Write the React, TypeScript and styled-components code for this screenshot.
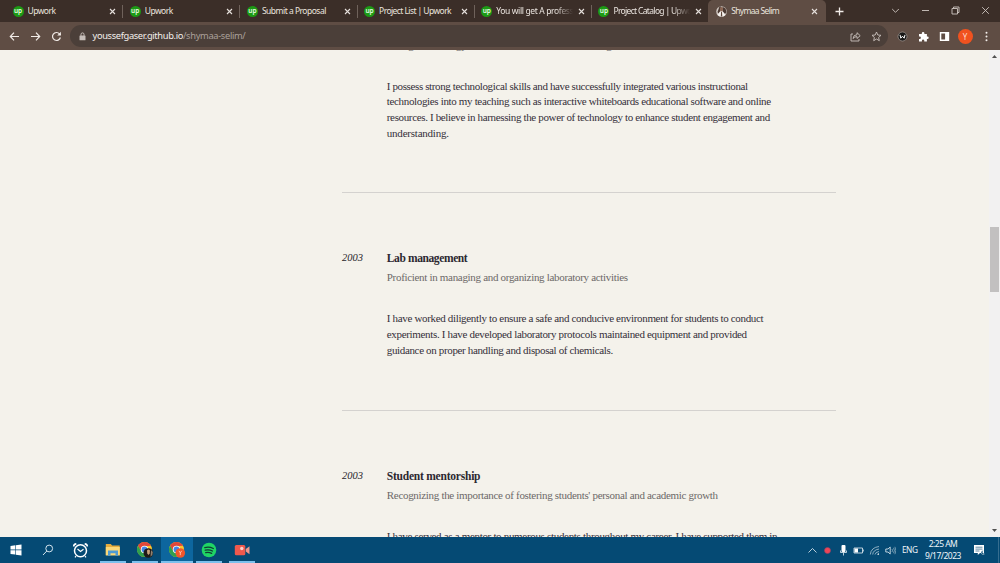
import { useLayoutEffect, useRef, useState } from 'react';
import styled, { createGlobalStyle, css } from 'styled-components';

const tabs = [
  { title: 'Upwork', width: 28 },
  { title: 'Upwork', width: 28 },
  { title: 'Submit a Proposal', width: 64 },
  { title: 'Project List | Upwork', width: 72 },
  { title: 'You will get A profess', width: 77, fade: true },
  { title: 'Project Catalog | Upwo', width: 78, fade: true },
  { title: 'Shymaa Selim', width: 48, active: true },
];

const entries = [
  {
    year: '',
    title: '',
    subtitle: 'Using technology to enhance the student learning',
    subtitleWidth: 225,
    lines: [
      { text: 'I possess strong technological skills and have successfully integrated various instructional', width: 361 },
      { text: 'technologies into my teaching such as interactive whiteboards educational software and online', width: 384 },
      { text: 'resources. I believe in harnessing the power of technology to enhance student engagement and', width: 383 },
      { text: 'understanding.', width: 62 },
    ],
  },
  {
    year: '2003',
    title: 'Lab management',
    titleWidth: 80.5,
    subtitle: 'Proficient in managing and organizing laboratory activities',
    subtitleWidth: 241,
    lines: [
      { text: 'I have worked diligently to ensure a safe and conducive environment for students to conduct', width: 376.5 },
      { text: 'experiments. I have developed laboratory protocols maintained equipment and provided', width: 360 },
      { text: 'guidance on proper handling and disposal of chemicals.', width: 226 },
    ],
  },
  {
    year: '2003',
    title: 'Student mentorship',
    titleWidth: 93.5,
    subtitle: "Recognizing the importance of fostering students' personal and academic growth",
    subtitleWidth: 331,
    lines: [
      { text: 'I have served as a mentor to numerous students throughout my career. I have supported them in', width: 390.5 },
    ],
  },
];

// Tracks the letters so that the text takes the given width
function FitText({ text, width }: { text: string; width: number }) {
  const ref = useRef<HTMLSpanElement>(null);
  const [spacing, setSpacing] = useState(0);

  useLayoutEffect(() => {
    if (!ref.current) return;
    const natural = ref.current.getBoundingClientRect().width - spacing * text.length;
    setSpacing((width - natural) / text.length);
  }, [text, width]);

  return <Fitted ref={ref} style={{ letterSpacing: `${spacing}px` }}>{text}</Fitted>;
}

const CloseIcon = () => (
  <svg width="7" height="7" viewBox="0 0 7 7" stroke="#e6e0dc" strokeWidth="1.1" fill="none">
    <path d="M1 1l5 5M6 1L1 6" />
  </svg>
);

const PortraitIcon = () => (
  <svg width="11" height="11" viewBox="0 0 11 11">
    <circle cx="5.5" cy="5.5" r="5.3" fill="#cfc6c0" />
    <path d="M3.300 1L5 .5 4.300 5 2.500 7.500 1.500 6zM6.500.8L9.500 2.500 10.500 6 9 8 7 6z" fill="#4b3a33" />
    <path d="M4 4Q3.800 1 5.500 1T7 4L6.300 6h-1.500z" fill="#8a6654" />
    <path d="M4.300 5.500h2.400L9.500 9Q5.500 12.500 1.500 9z" fill="#f5f2ef" />
    <path d="M5.100 6h.9l.3 4.500H4.800z" fill="#5a4439" />
  </svg>
);

const ChromeIcon = ({ badge }: { badge: 'photo' | 'letter' }) => (
  <svg width="18" height="18" viewBox="0 0 18 18">
    <circle cx="8.500" cy="8.500" r="7.500" fill="#fbc62d" />
    <path d="M2 4.750A7.500 7.500 0 0 1 15 4.750L8.500 5.200 5.300 10.400z" fill="#e0473b" />
    <path d="M2 4.750A7.500 7.500 0 0 0 8.500 16L11.500 10.500 5.500 10.400z" fill="#2fa04f" />
    <circle cx="8.500" cy="8.500" r="3.700" fill="#fff" />
    <circle cx="8.500" cy="8.500" r="2.900" fill="#4285e8" />
    {badge === 'photo' ? (
      <>
        <circle cx="12.300" cy="12" r="4.800" fill="#1f1a19" />
        <path d="M11 9.500q1.500-2 3 0l-.3 3-1.200 1.500-1.200-1.500z" fill="#c9a17b" />
        <path d="M15 9l1.800 2-.5 3-1.800 1.800z" fill="#8e8272" />
      </>
    ) : (
      <>
        <circle cx="12.300" cy="12" r="4.800" fill="#f0562b" />
        <path d="M10.900 9.800l1.400 2.100 1.400-2.100M12.300 11.900v2.300" stroke="#ffd5c4" strokeWidth=".8" fill="none" />
      </>
    )}
  </svg>
);

export default function App() {
  return (
    <Screen>
      <GlobalStyle />
      <TabStrip>
        {tabs.map((tab, i) => (
          <Tab key={i} $active={tab.active} $divider={i < 5}>
            {tab.active ? <PortraitIcon /> : <UpBadge>up</UpBadge>}
            <TabTitle $fade={tab.fade}><FitText text={tab.title} width={tab.width} /></TabTitle>
            <CloseIcon />
          </Tab>
        ))}
        <NewTab>
          <svg width="9" height="9" viewBox="0 0 9 9" stroke="#f1ece8" strokeWidth="1.300">
            <path d="M4.500.5v8M.5 4.500h8" />
          </svg>
        </NewTab>
        <WindowControls>
          <svg width="9" height="9" viewBox="0 0 9 9"><path d="M1.200 3l3.300 3.300L7.800 3" /></svg>
          <svg width="9" height="9" viewBox="0 0 9 9"><path d="M1 4.500h7" /></svg>
          <svg width="9" height="9" viewBox="0 0 9 9"><path d="M1 2.500h5.500V8H1zM2.500 2.500V1H8v5.500H6.500" /></svg>
          <svg width="9" height="9" viewBox="0 0 9 9"><path d="M1.200 1.200l6.600 6.600M7.800 1.200L1.200 7.800" /></svg>
        </WindowControls>
      </TabStrip>

      <Toolbar>
        <NavButtons>
          <svg width="11" height="11" viewBox="0 0 11 11"><path d="M10 5.500H1.500M5 1.700L1.300 5.500 5 9.300" /></svg>
          <svg width="11" height="11" viewBox="0 0 11 11"><path d="M1 5.500h8.500M6 1.700l3.700 3.800L6 9.300" /></svg>
          <svg width="11" height="11" viewBox="0 0 11 11">
            <path d="M9.400 6.500A4 4 0 1 1 8.500 2.800L9.600 3.900" />
            <path d="M9.900.8v3.700H6.200z" fill="#f1ebe7" stroke="none" />
          </svg>
        </NavButtons>
        <AddressBar>
          <svg width="7" height="9" viewBox="0 0 7 9">
            <rect x=".5" y="3.500" width="6" height="4.800" rx=".6" fill="#c6beb9" />
            <path d="M2 3.800V2.400a1.500 1.500 0 0 1 3 0v1.400" stroke="#c6beb9" fill="none" />
          </svg>
          <Url>
            <FitText text="youssefgaser.github.io" width={90.500} />
            <Path><FitText text="/shymaa-selim/" width={62.500} /></Path>
          </Url>
          <AddressActions>
            <svg width="11" height="11" viewBox="0 0 11 11">
              <path d="M3 3H1v7h8V8M3 7.500q.4-3.800 4-3.800V1.700l3.200 3L7 7.500V5.600Q4.700 5.500 3 7.500z" />
            </svg>
            <svg width="11" height="11" viewBox="0 0 11 11">
              <path d="M5.500 1l1.300 3 3.200.3-2.400 2.200.7 3.200-2.800-1.700-2.800 1.700.7-3.200L1 4.300 4.200 4z" />
            </svg>
          </AddressActions>
        </AddressBar>
        <Extensions>
          <svg width="11" height="11" viewBox="0 0 11 11">
            <circle cx="5.500" cy="5.500" r="4.500" fill="#171615" stroke="#a39b96" strokeWidth=".7" />
            <path d="M3 3.800l.8 3.400 1.700-2 1.700 2L8 3.800" fill="none" stroke="#fff" strokeWidth="1" />
          </svg>
          <svg width="11" height="11" viewBox="0 0 11 11">
            <path d="M1 3h2.800V2.200a1.300 1.300 0 0 1 2.600 0V3h2.500v2.500h.5a1.300 1.300 0 0 1 0 2.600h-.5v2.400H6.300v-.7a1.200 1.200 0 0 0-2.400 0v.7H1V8h.7a1.200 1.200 0 0 0 0-2.400H1z" fill="#fff" />
          </svg>
          <svg width="11" height="11" viewBox="0 0 11 11">
            <path d="M.8 1h9.400v9H.8zM2.300 2.500v6h3.800v-6z" fill="#fff" fillRule="evenodd" />
          </svg>
          <Avatar>Y</Avatar>
          <svg width="11" height="11" viewBox="0 0 11 11" fill="#f3eeea">
            <circle cx="5.500" cy="1.700" r="1" /><circle cx="5.500" cy="5.500" r="1" /><circle cx="5.500" cy="9.300" r="1" />
          </svg>
        </Extensions>
      </Toolbar>

      <Viewport>
        <Page>
          {entries.map((entry, i) => (
            <Entry key={i} $first={i === 0}>
              <Year>{entry.year}</Year>
              <div>
                {entry.title && <Title><FitText text={entry.title} width={entry.titleWidth ?? 0} /></Title>}
                <Subtitle><FitText text={entry.subtitle} width={entry.subtitleWidth} /></Subtitle>
                <Body>
                  {entry.lines.map(line => (
                    <Line key={line.text}><FitText text={line.text} width={line.width} /></Line>
                  ))}
                </Body>
              </div>
            </Entry>
          ))}
        </Page>
        <Scrollbar>
          <svg width="5" height="3" viewBox="0 0 5 3"><path d="M0 3L2.500 0 5 3z" fill="#505050" /></svg>
          <Thumb />
          <svg width="5" height="3" viewBox="0 0 5 3"><path d="M0 0L2.500 3 5 0z" fill="#505050" /></svg>
        </Scrollbar>
      </Viewport>

      <Taskbar>
        <Apps>
          <AppButton>
            <svg width="12" height="12" viewBox="0 0 12 12" fill="#fff">
              <path d="M.5 2l4.700-.7v4.300H.5zM5.800 1.200L11.500.4v5.200H5.800zM.5 6.300h4.700v4.300L.5 10zM5.800 6.300h5.700v5.200l-5.700-.8z" />
            </svg>
          </AppButton>
          <AppButton>
            <svg width="12" height="12" viewBox="0 0 12 12" fill="none" stroke="#d4e4ee">
              <circle cx="7.200" cy="4.500" r="3.400" /><path d="M4.800 7L1 11" />
            </svg>
          </AppButton>
          <AppButton>
            <svg width="17" height="17" viewBox="0 0 17 17" fill="none" stroke="#fff">
              <circle cx="8.500" cy="8.800" r="6" strokeWidth="1.500" />
              <path d="M5.500 7l3 2.500 3-2.300M4 14.200l-1 1.200M13 14.200l1 1.200" strokeWidth="1.200" />
              <path d="M1.700 4.500Q1.700 2.200 4.300 1.900M15.300 4.500Q15.300 2.200 12.700 1.900" strokeWidth="1.600" />
            </svg>
          </AppButton>
          <AppButton $open>
            <svg width="16" height="14" viewBox="0 0 16 14">
              <path d="M.8 1h5l1.300 1.500h7.600V12H.8z" fill="#e5ac3d" />
              <path d="M.8 4h14v8.500H.8z" fill="#fbd877" />
              <path d="M3 7.500h10v5.300h-2.500v-2.500h-5v2.500H3z" fill="#4d9bd4" />
            </svg>
          </AppButton>
          <AppButton $open><ChromeIcon badge="photo" /></AppButton>
          <AppButton $open $active><ChromeIcon badge="letter" /></AppButton>
          <AppButton $open>
            <svg width="16" height="16" viewBox="0 0 16 16">
              <circle cx="8" cy="8" r="7.300" fill="#20d565" />
              <path d="M3.800 5.700Q8 4.400 12.300 6.500M4.200 8.200Q8 7.100 11.500 9M4.700 10.600Q7.800 9.800 10.700 11.300" fill="none" stroke="#103d32" strokeWidth="1.300" strokeLinecap="round" />
            </svg>
          </AppButton>
          <AppButton $open>
            <svg width="16" height="14" viewBox="0 0 16 14">
              <rect x=".8" y="2" width="10.500" height="10.300" rx="1.500" fill="#ef594d" />
              <path d="M11.800 6l3.700-2.800v8L11.800 8.500z" fill="#f2968b" />
              <circle cx="7.800" cy="5.500" r="1.700" fill="#fbd0cb" />
            </svg>
          </AppButton>
        </Apps>
        <Tray>
          <svg width="11" height="11" viewBox="0 0 11 11"><path d="M1.500 7.500l4-4 4 4" /></svg>
          <svg width="11" height="11" viewBox="0 0 11 11"><circle cx="5.500" cy="5.500" r="3" fill="#ee4657" stroke="#993f62" strokeWidth=".6" /></svg>
          <svg width="11" height="11" viewBox="0 0 11 11">
            <rect x="3.500" y="0" width="4" height="7" rx="1" fill="#fff" stroke="none" />
            <path d="M2.500 5.500v2h6v-2M5.500 7.500v3" />
          </svg>
          <svg width="11" height="11" viewBox="0 0 11 11">
            <path d="M1 3h8.500v5H1zM10.300 4.500v2" /><path d="M1.500 3.500h3.500v4H1.500z" fill="#fff" stroke="none" />
          </svg>
          <svg width="11" height="11" viewBox="0 0 11 11">
            <path d="M1.300 9.500Q2 2.500 10 1.500M3.700 9.500Q4 5 10 4M6 9.500Q6.500 7 10 6.500" opacity=".75" />
            <path d="M8.300 9.800q0-1.500 1.700-1.500v1.500z" fill="#fff" stroke="none" />
          </svg>
          <svg width="11" height="11" viewBox="0 0 11 11">
            <path d="M.8 4H3l2.200-2v7L3 7H.8z" /><path d="M7 4q1 1.500 0 3M8.500 2.800q1.800 2.700 0 5.400M9.900 1.800q2 3.700 0 7.400" opacity=".6" />
          </svg>
        </Tray>
        <Language><FitText text="ENG" width={15.500} /></Language>
        <Clock>
          <FitText text="2:25 AM" width={28.500} />
          <FitText text="9/17/2023" width={36} />
        </Clock>
        <Notifications>
          <svg width="12" height="12" viewBox="0 0 12 12">
            <path d="M1 1h10v8H7l-2.200 2V9H1z" fill="#fff" />
            <path d="M2.500 3.200h7M2.500 5.100h7M2.500 7h4" stroke="#376b8c" strokeWidth=".8" />
            <path d="M10.500 6.500a2 2 0 1 0 .8 3.500 2 2 0 0 1-.8-3.500z" fill="#054a74" stroke="#fff" strokeWidth=".5" />
          </svg>
        </Notifications>
      </Taskbar>
    </Screen>
  );
}

const GlobalStyle = createGlobalStyle`
  body {
    margin: 0;
    overflow: hidden;
  }

  svg {
    display: block;
    flex-shrink: 0;
  }
`;

const Screen = styled.div`
  width: 1000px;
  height: 563px;
  display: flex;
  flex-direction: column;
  overflow: hidden;
  font-family: 'Noto Sans', 'Open Sans', sans-serif;
  background: #f4f2eb;
`;

const Fitted = styled.span`
  display: inline-block;
  white-space: pre;
`;

const TabStrip = styled.div`
  height: 22px;
  flex-shrink: 0;
  display: flex;
  align-items: stretch;
  padding-left: 6px;
  background: #3b2e28;
`;

const Tab = styled.div<{ $active?: boolean; $divider?: boolean }>`
  width: 117.200px;
  box-sizing: border-box;
  flex-shrink: 0;
  display: flex;
  align-items: center;
  gap: 4px;
  padding: 0 7px 0 6.500px;
  color: #eae4df;
  background: linear-gradient(#6f625b, #6f625b) right center / ${({ $divider }) => ($divider ? '1px 13px' : '0 0')} no-repeat;

  ${({ $active }) =>
    $active &&
    css`
      width: 118px;
      background: #5f4d44;
      border-radius: 5px 5px 0 0;
      margin: 0 0 0 -1px;
      padding-left: 8px;
      padding-right: 8px;
    `}
`;

const UpBadge = styled.div`
  width: 11px;
  height: 11px;
  flex-shrink: 0;
  border-radius: 50%;
  background: #1c9a14;
  color: #e9fbe5;
  font-size: 6.500px;
  font-weight: 600;
  line-height: 9.500px;
  text-align: center;
`;

const TabTitle = styled.div<{ $fade?: boolean }>`
  flex: 1;
  min-width: 0;
  overflow: hidden;
  font-size: 8.500px;
  line-height: 14px;
  ${({ $fade }) => $fade && 'mask-image: linear-gradient(to right, #000 76%, transparent 99%);'}
`;

const NewTab = styled.div`
  display: flex;
  align-items: center;
  padding-left: 8.500px;
`;

const WindowControls = styled.div`
  margin-left: auto;
  display: flex;
  align-items: center;
  gap: 21px;
  padding: 0 10.500px 2px 0;

  path {
    fill: none;
    stroke: #cfc7c2;
    stroke-width: 0.9;
  }
`;

const Toolbar = styled.div`
  height: 28px;
  flex-shrink: 0;
  display: flex;
  align-items: center;
  background: #5f4d44;
`;

const NavButtons = styled.div`
  width: 70px;
  box-sizing: border-box;
  display: flex;
  gap: 10px;
  padding-left: 9px;

  path {
    fill: none;
    stroke: #f1ebe7;
    stroke-width: 1.2;
  }

  path[stroke='none'] {
    fill: #f1ebe7;
    stroke: none;
  }
`;

const AddressBar = styled.div`
  width: 818px;
  height: 22px;
  box-sizing: border-box;
  display: flex;
  align-items: center;
  padding: 0 6px 0 8.500px;
  border-radius: 11px;
  background: #4b3f39;
`;

const Url = styled.div`
  display: flex;
  margin-left: 7px;
  font-size: 9.300px;
  line-height: 16px;
  color: #f3efec;
`;

const Path = styled.span`
  color: #aaa09a;
`;

const AddressActions = styled.div`
  margin-left: auto;
  display: flex;
  gap: 10px;

  path {
    fill: none;
    stroke: #cbc3be;
    stroke-width: 0.9;
  }
`;

const Extensions = styled.div`
  flex: 1;
  display: flex;
  align-items: center;
  gap: 10px;
  padding-left: 8.500px;
`;

const Avatar = styled.div`
  width: 15px;
  height: 15px;
  margin: 0 -2px;
  border-radius: 50%;
  background: #f0521f;
  color: #ffd9ca;
  font-size: 8px;
  line-height: 15px;
  text-align: center;
`;

const Viewport = styled.div`
  height: 487px;
  flex-shrink: 0;
  display: flex;
  overflow: hidden;
`;

const Page = styled.main`
  flex: 1;
  padding-left: 342px;
  font-family: 'Liberation Serif', serif;
  color: #34303a;
`;

const Entry = styled.section<{ $first?: boolean }>`
  width: 494px;
  height: ${({ $first }) => ($first ? '157px' : '217.500px')};
  box-sizing: border-box;
  display: grid;
  grid-template-columns: 44.800px 1fr;
  margin-top: ${({ $first }) => ($first ? '-14px' : '0')};
  padding-top: ${({ $first }) => ($first ? '0.500px' : '56px')};
  border-bottom: 1px solid #d4d2cf;
`;

const Year = styled.div`
  font-size: 10.500px;
  font-style: italic;
  line-height: 18px;
  color: #29252b;
`;

const Title = styled.h3`
  margin: 0 0 2px;
  height: 18px;
  font-size: 11.500px;
  font-weight: 700;
  line-height: 18px;
  color: #2c2830;
`;

const Subtitle = styled.div`
  height: 16px;
  font-size: 11px;
  line-height: 16px;
  color: #6c6968;
`;

const Body = styled.div`
  margin-top: 26.200px;
`;

const Line = styled.div`
  height: 15.700px;
  font-size: 11px;
  line-height: 15.700px;
`;

const Scrollbar = styled.div`
  width: 11px;
  box-sizing: border-box;
  display: flex;
  flex-direction: column;
  align-items: center;
  justify-content: space-between;
  padding: 5px 0;
  background: #f2f1f1;
`;

const Thumb = styled.div`
  width: 9px;
  height: 65px;
  margin-top: 169px;
  margin-bottom: auto;
  background: #c2c0c0;
`;

const Taskbar = styled.footer`
  height: 26px;
  flex-shrink: 0;
  display: flex;
  align-items: center;
  color: #eef5f9;
  background: #054a74;
`;

const Apps = styled.div`
  display: flex;
  height: 100%;
  margin-left: -0.200px;
`;

const AppButton = styled.div<{ $open?: boolean; $active?: boolean }>`
  width: 32.250px;
  display: flex;
  align-items: center;
  justify-content: center;
  background:
    linear-gradient(#7cc0ec, #7cc0ec) center bottom / ${({ $open, $active }) => ($active ? '100% 2px' : $open ? '26px 2px' : '0 0')} no-repeat,
    ${({ $active }) => ($active ? '#0d669e' : 'transparent')};
`;

const Tray = styled.div`
  margin-left: auto;
  display: flex;
  gap: 4.600px;
  margin-right: 6.500px;

  path {
    fill: none;
    stroke: #e7f0f5;
    stroke-width: 0.8;
  }

  path[fill='#fff'] {
    fill: #fff;
    stroke: none;
  }
`;

const Language = styled.div`
  width: 16px;
  font-size: 8.300px;
  line-height: 12px;
  padding-bottom: 1px;
`;

const Clock = styled.div`
  width: 50px;
  display: flex;
  flex-direction: column;
  align-items: center;
  font-size: 8.500px;
  line-height: 12px;
`;

const Notifications = styled.div`
  width: 31px;
  height: 100%;
  box-sizing: border-box;
  display: flex;
  align-items: center;
  padding-left: 4.500px;
  margin-right: 1px;
  border-right: 1px solid #356d8f;
`;
